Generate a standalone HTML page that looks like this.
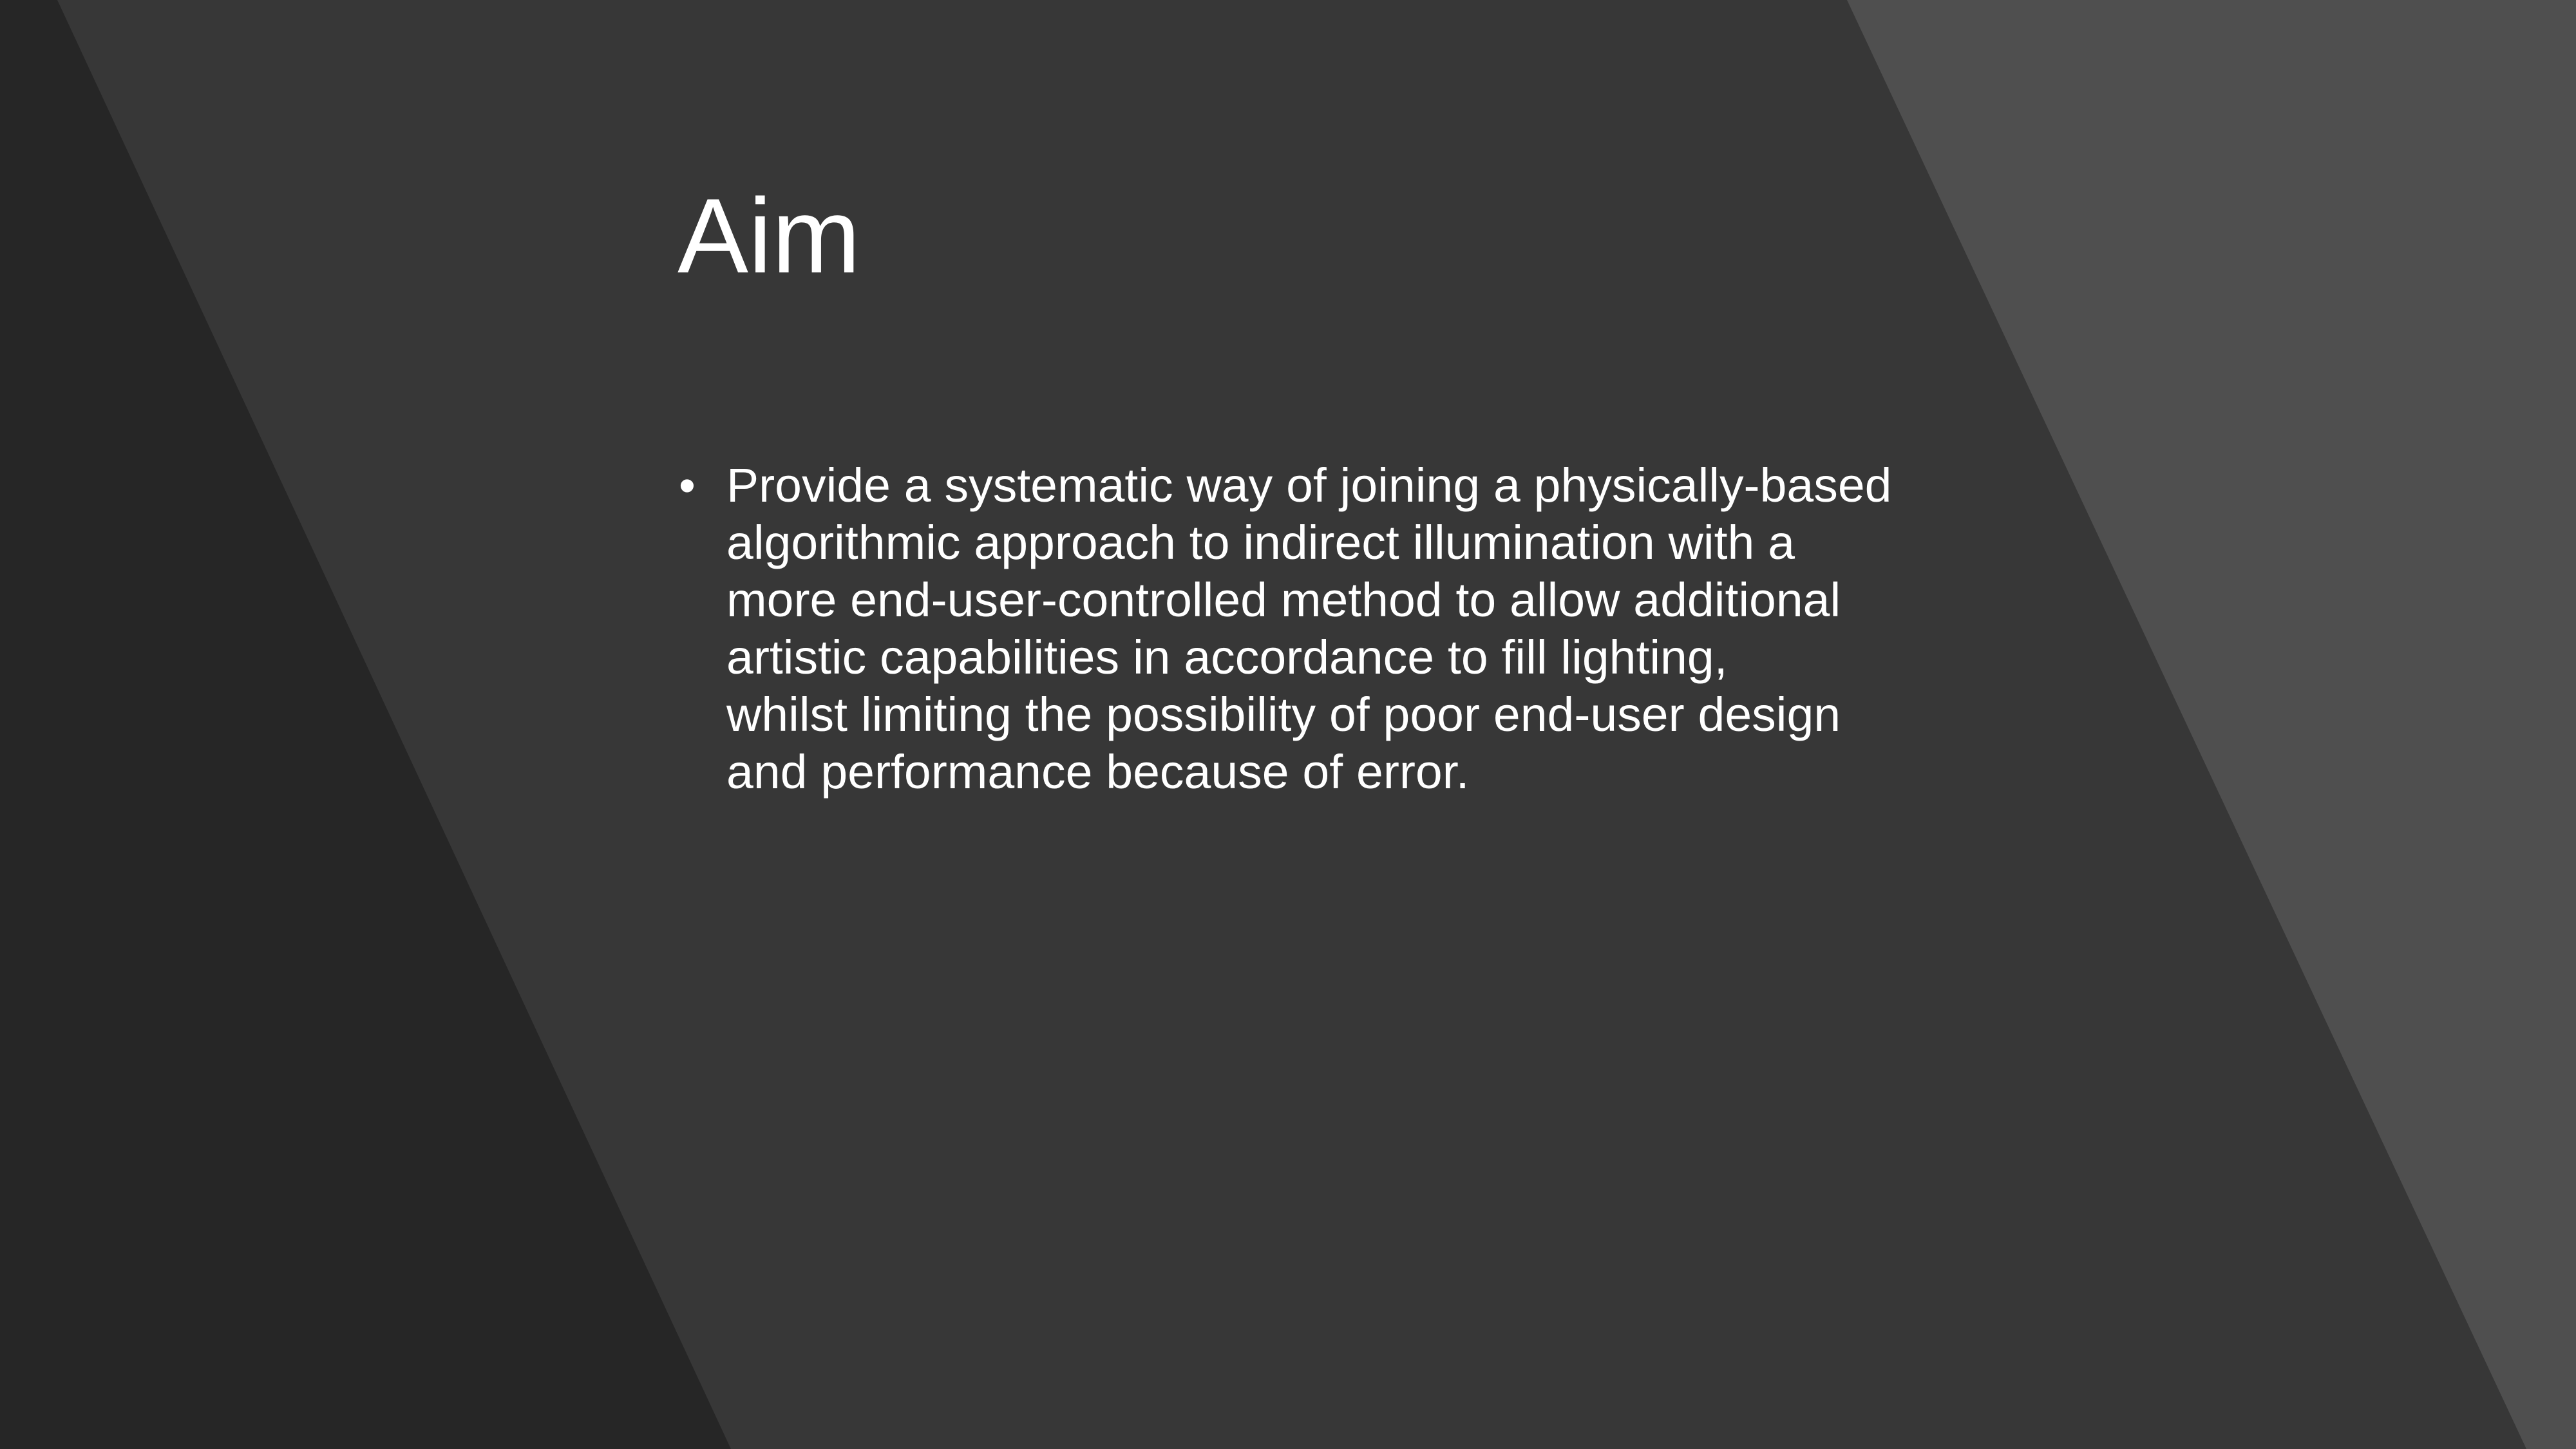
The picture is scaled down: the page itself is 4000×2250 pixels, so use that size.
<!DOCTYPE html>
<html><head><meta charset="utf-8"><style>
html,body{margin:0;padding:0;}
body{width:4000px;height:2250px;position:relative;overflow:hidden;background:#373737;font-family:"Liberation Sans",sans-serif;color:#fff;}
svg{position:absolute;left:0;top:0;}
.title{position:absolute;left:1052px;top:272px;font-size:165px;line-height:normal;white-space:nowrap;}
.body{position:absolute;left:1054px;top:709px;font-size:74px;line-height:89px;white-space:nowrap;}
.body .b{position:absolute;left:0;top:0;}
.body .t{position:absolute;left:74px;top:0;transform:scaleX(1.016);transform-origin:0 0;}
</style></head><body>
<svg width="4000" height="2250" viewBox="0 0 4000 2250">
<polygon points="0,0 89,0 1135,2250 0,2250" fill="#262626"/>
<polygon points="2868,0 4000,0 4000,2250 3923,2250" fill="#4f4f4f"/>
</svg>
<div class="title">Aim</div>
<div class="body"><span class="b">•</span><div class="t">Provide a systematic way of joining a physically-based<br>algorithmic approach to indirect illumination with a<br>more end-user-controlled method to allow additional<br>artistic capabilities in accordance to fill lighting,<br>whilst limiting the possibility of poor end-user design<br>and performance because of error.</div></div>
</body></html>
